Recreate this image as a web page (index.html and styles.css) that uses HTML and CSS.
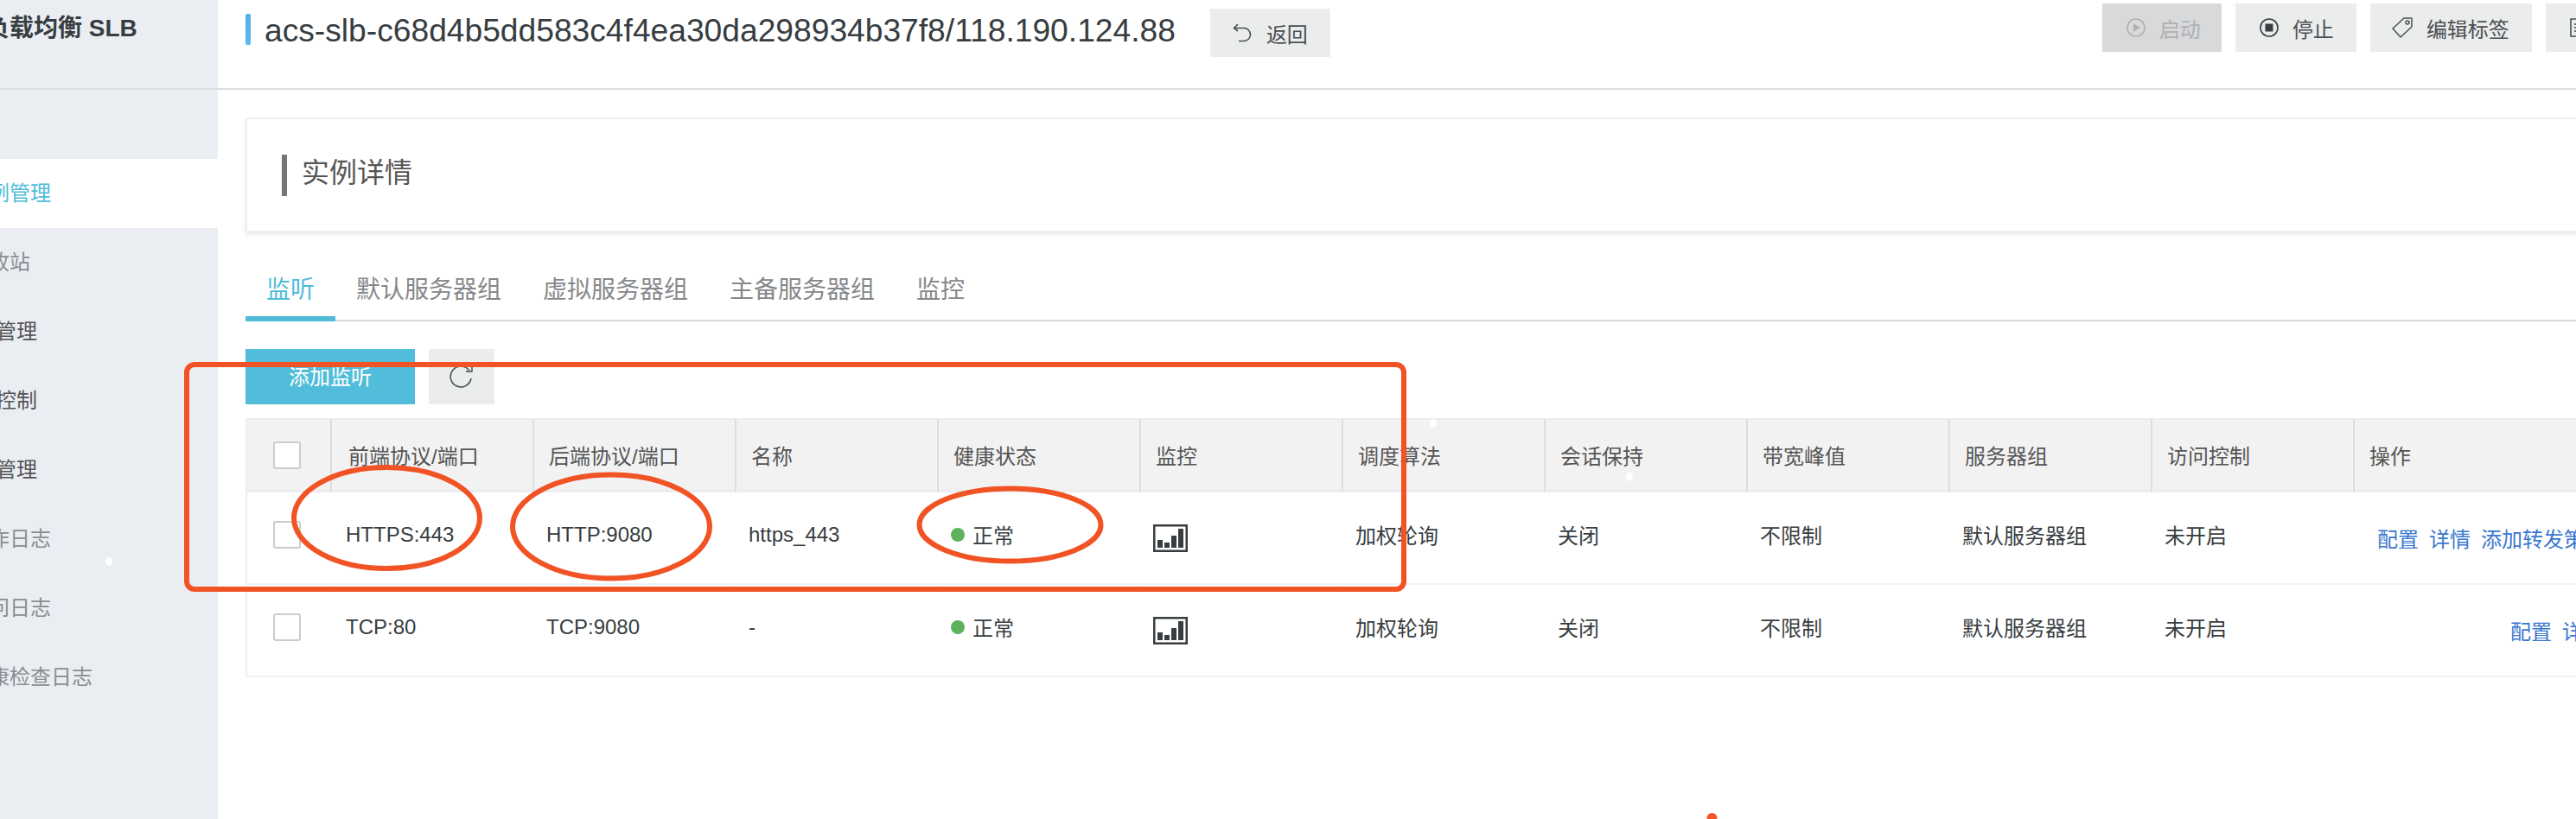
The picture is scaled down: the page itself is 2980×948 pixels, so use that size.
FILE: index.html
```html
<!DOCTYPE html>
<html lang="zh-CN">
<head>
    <meta charset="UTF-8">
    <title>实例详情</title>
    <link rel="stylesheet" href="styles.css">
</head>
<body>
    <aside class="sidebar">
        <div class="brand">负载均衡 SLB</div>
        <ul class="nav">
            <li class="nav-item active">实例管理</li>
            <li class="nav-item muted">回收站</li>
            <li class="nav-item deep">证书管理</li>
            <li class="nav-item deep">访问控制</li>
            <li class="nav-item deep">标签管理</li>
            <li class="nav-item muted">操作日志</li>
            <li class="nav-item muted">访问日志</li>
            <li class="nav-item muted">健康检查日志</li>
        </ul>
    </aside>

    <main class="main">
        <header class="topbar">
            <span class="title-mark"></span>
            <h1 class="title">acs-slb-c68d4b5dd583c4f4ea30da298934b37f8/118.190.124.88</h1>
            <button class="btn back-btn">
                <svg width="24" height="22" viewBox="0 0 24 22" fill="none" stroke="#4a4f53" stroke-width="1.6"><path d="M6 1 L1.5 5.5 L6 9"/><path d="M2 5.5 H13 A7.5 7.5 0 0 1 13 20.5 H7"/></svg>
                返回
            </button>
            <div class="actions">
                <button class="btn disabled">
                    <svg width="22" height="22" viewBox="0 0 22 22" fill="none" stroke="#aeb0b2" stroke-width="1.6"><circle cx="11" cy="11" r="10"/><path d="M8 6 L16 11 L8 16 Z" fill="#aeb0b2" stroke="none"/></svg>
                    启动
                </button>
                <button class="btn">
                    <svg width="22" height="22" viewBox="0 0 22 22" fill="none" stroke="#373d41" stroke-width="1.6"><circle cx="11" cy="11" r="10"/><rect x="6.5" y="6.5" width="9" height="9" fill="#373d41" stroke="none"/></svg>
                    停止
                </button>
                <button class="btn tag-btn">
                    <svg width="24" height="24" viewBox="0 0 24 24" fill="none" stroke="#4a4f53" stroke-width="1.5"><path d="M14 1 H23 V11 L10 23 L1 13 Z" stroke-linejoin="round"/><circle cx="18" cy="6" r="2"/></svg>
                    编辑标签
                </button>
                <button class="btn">
                    <svg width="22" height="22" viewBox="0 0 22 22" fill="none" stroke="#4a4f53" stroke-width="1.6"><path d="M1 1 H21 V21 H1 Z M5 7 H17 M5 11 H17 M5 15 H17"/></svg>
                </button>
            </div>
        </header>

        <section class="card">
            <span class="card-mark"></span>
            <h2 class="card-title">实例详情</h2>
        </section>

        <nav class="tabs">
            <a class="tab active">监听</a>
            <a class="tab">默认服务器组</a>
            <a class="tab">虚拟服务器组</a>
            <a class="tab">主备服务器组</a>
            <a class="tab">监控</a>
        </nav>

        <div class="toolbar">
            <button class="add-btn">添加监听</button>
            <button class="refresh-btn">
                <svg width="30" height="28" viewBox="0 0 30 28" fill="none" stroke="#4a4f53" stroke-width="1.5"><path d="M24 7 A12 12 0 1 0 26 16"/><path d="M27 1 V8 H20"/></svg>
            </button>
        </div>

        <table class="listeners">
            <thead>
                <tr>
                    <th class="check-col"><span class="checkbox"></span></th>
                    <th>前端协议/端口</th>
                    <th>后端协议/端口</th>
                    <th>名称</th>
                    <th>健康状态</th>
                    <th>监控</th>
                    <th>调度算法</th>
                    <th>会话保持</th>
                    <th>带宽峰值</th>
                    <th>服务器组</th>
                    <th>访问控制</th>
                    <th class="ops-col">操作</th>
                </tr>
            </thead>
            <tbody>
                <tr>
                    <td class="check-col"><span class="checkbox"></span></td>
                    <td>HTTPS:443</td>
                    <td>HTTP:9080</td>
                    <td>https_443</td>
                    <td><span class="status"><i class="dot"></i>正常</span></td>
                    <td>
                        <svg class="chart-icon" width="40" height="32" viewBox="0 0 40 32"><rect x="1.25" y="1.25" width="37.5" height="29.5" fill="#fff" stroke="#373d41" stroke-width="2.5"/><path d="M5 18 h6 v9 h-6 z M13 21 h6 v6 h-6 z M21 13 h6 v14 h-6 z M29 5 h6 v22 h-6 z" fill="#373d41"/></svg>
                    </td>
                    <td>加权轮询</td>
                    <td>关闭</td>
                    <td>不限制</td>
                    <td>默认服务器组</td>
                    <td>未开启</td>
                    <td class="ops"><a>配置</a><a>详情</a><a>添加转发策略</a></td>
                </tr>
                <tr>
                    <td class="check-col"><span class="checkbox"></span></td>
                    <td>TCP:80</td>
                    <td>TCP:9080</td>
                    <td>-</td>
                    <td><span class="status"><i class="dot"></i>正常</span></td>
                    <td>
                        <svg class="chart-icon" width="40" height="32" viewBox="0 0 40 32"><rect x="1.25" y="1.25" width="37.5" height="29.5" fill="#fff" stroke="#373d41" stroke-width="2.5"/><path d="M5 18 h6 v9 h-6 z M13 21 h6 v6 h-6 z M21 13 h6 v14 h-6 z M29 5 h6 v22 h-6 z" fill="#373d41"/></svg>
                    </td>
                    <td>加权轮询</td>
                    <td>关闭</td>
                    <td>不限制</td>
                    <td>默认服务器组</td>
                    <td>未开启</td>
                    <td class="ops short"><a>配置</a><a>详情</a></td>
                </tr>
            </tbody>
        </table>
    </main>

    <!-- hand drawn marks on top of the screenshot -->
    <svg class="annotations" width="2980" height="948" viewBox="0 0 2980 948" fill="none" stroke="#f15324" stroke-width="6">
        <rect x="216" y="422" width="1408" height="260" rx="9"/>
        <ellipse cx="447.5" cy="599.5" rx="107.5" ry="58.5"/>
        <ellipse cx="707" cy="609.5" rx="114" ry="60"/>
        <ellipse cx="1168.5" cy="607.5" rx="105" ry="42"/>
        <ellipse cx="126" cy="650" rx="4" ry="5" fill="#fff" stroke="none"/>
        <ellipse cx="1658" cy="490" rx="4" ry="5" fill="#fff" stroke="none"/>
        <ellipse cx="1885" cy="552" rx="4" ry="5" fill="#fff" stroke="none"/>
        <circle cx="1980.5" cy="947" r="6" fill="#f15324" stroke="none"/>
    </svg>
</body>
</html>
```

FILE: styles.css
```css
html, body {
    margin: 0;
    height: 948px;
    overflow: hidden;
}

body {
    position: relative;
    display: flex;
    background: #fff;
    color: #373d41;
    font-family: "Liberation Sans", "Noto Sans CJK SC", sans-serif;
    font-size: 24px;
}

button {
    font-family: inherit;
    border: none;
    padding: 0;
}

/* Sidebar */
.sidebar {
    flex: 0 0 252px;
    width: 252px;
    height: 948px;
    background: #eaedf2;
    overflow: hidden;
}

.brand {
    height: 89px;
    margin-left: -17px;
    padding-top: 13px;
    line-height: 40px;
    font-size: 28px;
    font-weight: bold;
    white-space: nowrap;
    border-bottom: 2px solid #dcdddf;
}

.nav {
    list-style: none;
    margin: 80px 0 0;
    padding: 0;
}

.nav-item {
    height: 80px;
    line-height: 80px;
    text-indent: -37px;
    white-space: nowrap;
    color: #555;
}

.nav-item.active {
    background: #fff;
    color: #4fbcd9;
}

.nav-item.muted {
    color: #8a8d90;
}

.nav-item.deep {
    text-indent: -53px;
}

/* Top bar */
.main {
    flex: 1;
    min-width: 0;
    overflow: hidden;
}

.topbar {
    display: flex;
    height: 102px;
    padding-left: 32px;
    border-bottom: 2px solid #dcdddf;
}

.title-mark {
    flex: none;
    width: 6px;
    height: 36px;
    margin: 16px 16px 0 0;
    border-radius: 2px;
    background: linear-gradient(#4fb0e8, #5ab8ee);
}

.title {
    flex: none;
    margin: 14px 40px 0 0;
    font-size: 37.2px;
    font-weight: normal;
    line-height: 42px;
    white-space: nowrap;
}

.btn {
    flex: none;
    display: flex;
    align-items: center;
    gap: 16px;
    height: 56px;
    padding: 0 26px 0 28px;
    background: #ebecec;
    color: #4a4f53;
    font-size: 24px;
}

.btn.disabled {
    padding-right: 24px;
    background: #d8d9db;
    color: #aeb0b2;
}

.back-btn {
    gap: 15px;
    margin-top: 10px;
    padding: 0 26px;
}

.tag-btn {
    padding-left: 25px;
}

.actions {
    flex: none;
    display: flex;
    gap: 16px;
    margin: 4px 0 0 893px;
}

/* Instance card */
.card {
    display: flex;
    align-items: center;
    box-sizing: border-box;
    height: 133px;
    margin: 32px -10px 0 32px;
    padding-left: 40px;
    border: 2px solid #eeeeee;
    box-shadow: 0 2px 4px rgba(0, 0, 0, 0.1);
}

.card-mark {
    width: 6px;
    height: 48px;
    margin-right: 17px;
    background: #73777a;
}

.card-title {
    margin: 0 0 12px;
    font-size: 32px;
    font-weight: normal;
    color: #555;
}

/* Tabs */
.tabs {
    display: flex;
    align-items: flex-start;
    height: 66px;
    margin: 35px 0 0 32px;
    border-bottom: 2px solid #d8d9db;
}

.tab {
    padding: 12px 24px 10px;
    line-height: 40px;
    font-size: 28px;
    color: #85888b;
    border-bottom: 6px solid transparent;
}

.tab.active {
    color: #4fbcd9;
    border-bottom-color: #4fbcd9;
}

/* Toolbar */
.toolbar {
    display: flex;
    gap: 16px;
    margin: 32px 0 16px 32px;
}

.add-btn {
    width: 196px;
    height: 64px;
    padding-bottom: 4px;
    background: #51bdda;
    color: #fff;
    font-size: 24px;
}

.refresh-btn {
    display: flex;
    align-items: center;
    justify-content: center;
    width: 76px;
    height: 64px;
    background: #ebecec;
}

/* Table */
.listeners {
    table-layout: fixed;
    width: 3017px;
    margin-left: 32px;
    border-collapse: separate;
    border-spacing: 0;
}

.listeners th {
    width: 215px;
    height: 81px;
    padding: 0 0 0 17px;
    text-align: left;
    font-weight: normal;
    color: #555;
    background: #f2f2f2;
    border-top: 2px solid #ecedf0;
    border-bottom: 3px solid #ebedf1;
    border-left: 2px solid #dcdddf;
    white-space: nowrap;
}

.listeners th.check-col {
    width: 66px;
    padding-left: 30px;
    border-left-color: #eff0f2;
}

.listeners th.check-col + th {
    width: 213px;
    padding-left: 19px;
}

.listeners th.ops-col {
    width: 560px;
}

.listeners td {
    height: 97px;
    padding: 0 0 8px 14px;
    border-bottom: 2px solid #f2f2f2;
    border-left: 2px solid transparent;
    white-space: nowrap;
}

.listeners td.check-col {
    padding-left: 30px;
    border-left-color: #eff0f2;
    vertical-align: middle;
}

.listeners td.check-col + td {
    padding-left: 16px;
}

.checkbox {
    display: block;
    box-sizing: border-box;
    width: 32px;
    height: 32px;
    background: #fff;
    border: 2px solid #cccccc;
    border-radius: 3px;
}

.status {
    display: flex;
    align-items: center;
    gap: 9px;
}

.dot {
    width: 16px;
    height: 16px;
    border-radius: 50%;
    background: #5cb25a;
}

.chart-icon {
    display: block;
    margin-top: 8px;
}

.listeners td.ops {
    padding: 0 0 0 26px;
    color: #3a77cf;
}

.ops a {
    margin-right: 12px;
}

.listeners td.ops.short {
    padding-left: 180px;
}

/* Marks */
.annotations {
    position: absolute;
    top: 0;
    left: 0;
    pointer-events: none;
}
```
